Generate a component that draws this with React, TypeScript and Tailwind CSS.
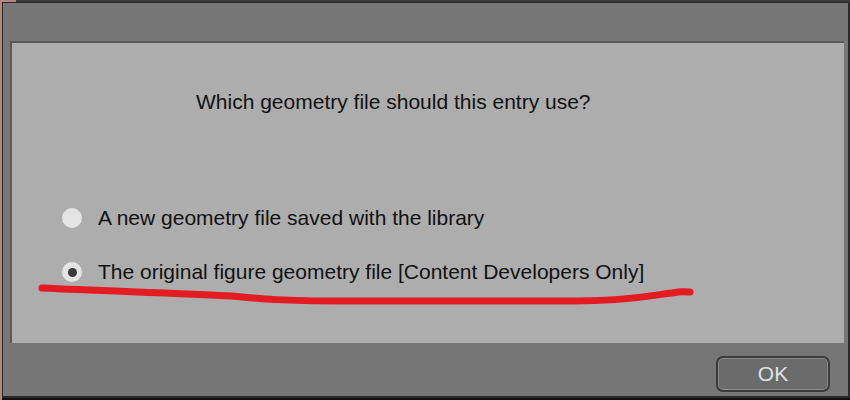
import React from "react";

const font = { fontFamily: '"Liberation Sans", Arial, sans-serif' };

const Radio = ({ checked }: { checked?: boolean }) => (
  <span className="w-[20px] h-[20px] rounded-full bg-[#e4e4e4] flex items-center justify-center shrink-0">
    {checked && <span className="w-[9px] h-[9px] rounded-full bg-[#3a3a3a]" />}
  </span>
);

const App: React.FC = () => {
  const options = [
    { label: "A new geometry file saved with the library", checked: false },
    { label: "The original figure geometry file [Content Developers Only]", checked: true },
  ];

  return (
    <div className="w-[850px] h-[400px] bg-[#111] flex flex-col overflow-hidden" style={font}>
      {/* top strip */}
      <div className="h-[2px] flex shrink-0">
        <div className="w-[16px] bg-[#b3857d]" />
        <div className="flex-1 bg-[#3a3a3a]" />
      </div>
      <div className="flex flex-1">
        <div className="w-[2px] bg-[#b3857d]" />
        <div className="flex-1 flex flex-col bg-[#767676] border-t border-l border-[#2a2a2a] border-r-2 border-b-2 mb-[2px]">
          {/* inner panel */}
          <div className="relative mt-[38px] ml-[7px] mr-[4px] h-[302px] bg-[#adadad] border-t-2 border-l-2 border-[#5a5a5a] flex flex-col">
            <p className="mt-[47px] ml-[184px] text-[21px] leading-[24px] text-[#111]">
              Which geometry file should this entry use?
            </p>
            <div className="mt-[92px] ml-[50px] flex flex-col gap-[30px]">
              {options.map((o) => (
                <div key={o.label} className="flex items-center gap-[16px]">
                  <Radio checked={o.checked} />
                  <span className="text-[21px] leading-[24px] text-[#111]">{o.label}</span>
                </div>
              ))}
            </div>
            {/* red annotation stroke */}
            <svg className="absolute left-0 top-0 pointer-events-none" width="840" height="300">
              <path
                d="M30 245 C 90 248, 170 250, 220 253 C 250 256, 270 258, 330 258 L 560 258 C 620 258, 640 252, 660 250 C 670 248, 675 249, 678 249"
                fill="none"
                stroke="#e31b22"
                strokeWidth="7"
                strokeLinecap="round"
              />
            </svg>
          </div>
          <div className="flex justify-end mt-[13px] mr-[18px]">
            <button className="w-[114px] h-[36px] rounded-[7px] bg-[#6b6b6b] border-2 border-[#3b3b3b] shadow-[inset_0_0_0_1px_#8a8a8a] text-[21px] text-[#dde2e5] flex items-center justify-center">
              OK
            </button>
          </div>
        </div>
      </div>
    </div>
  );
};

export default App;
